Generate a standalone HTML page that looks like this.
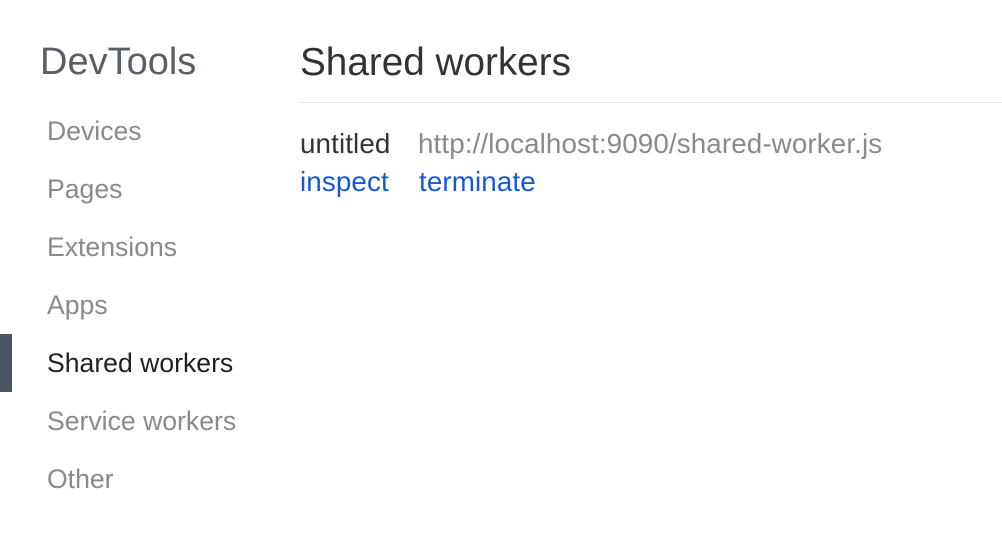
<!DOCTYPE html>
<html><head><style>
body{margin:0;width:1002px;height:538px;background:#fff;font-family:"Liberation Sans",sans-serif;position:relative;overflow:hidden}
.t{position:absolute;white-space:nowrap}
.nav{color:#8a8a8a;font-size:26.6px;left:47px}
.c{font-size:27.8px;letter-spacing:0.1px}
</style></head><body>
<div class="t" style="left:40px;top:41px;font-size:38px;color:#5a5f66">DevTools</div>
<div class="t nav" style="top:115.5px">Devices</div>
<div class="t nav" style="top:173.5px">Pages</div>
<div class="t nav" style="top:231.5px">Extensions</div>
<div class="t nav" style="top:289.5px">Apps</div>
<div style="position:absolute;left:0;top:334px;width:12px;height:58px;background:#4c5564"></div>
<div class="t nav" style="top:347.5px;color:#202124">Shared workers</div>
<div class="t nav" style="top:405.5px">Service workers</div>
<div class="t nav" style="top:463.5px">Other</div>
<div class="t" style="left:300px;top:40.5px;font-size:38.7px;color:#333">Shared workers</div>
<div style="position:absolute;left:300px;top:102px;width:702px;height:1px;background:#e5e5e5"></div>
<div class="t c" style="left:300px;top:127.5px;color:#333">untitled</div>
<div class="t c" style="left:418px;top:127.5px;color:#8a8a8a">http://localhost:9090/shared-worker.js</div>
<div class="t c" style="left:300px;top:165.5px;color:#1558d6">inspect</div>
<div class="t c" style="left:419px;top:165.5px;color:#1558d6">terminate</div>
</body></html>
